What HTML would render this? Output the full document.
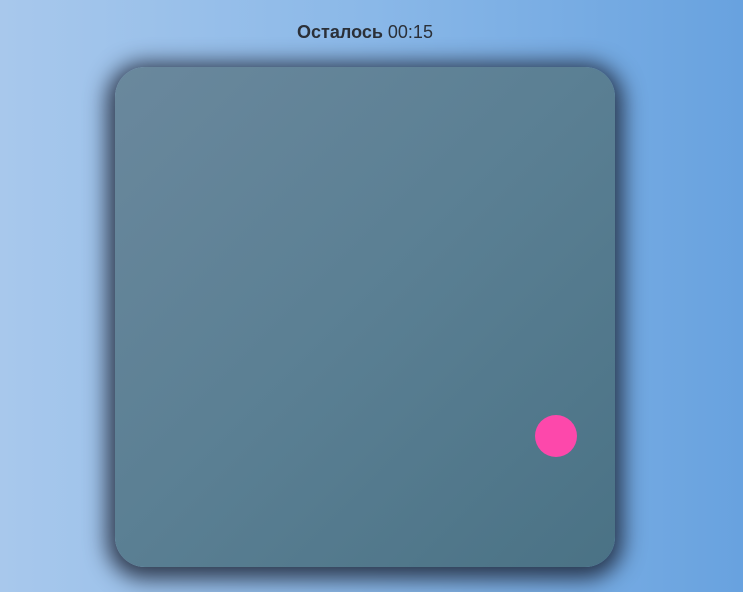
<!DOCTYPE html>
<html><head><meta charset="utf-8"><style>
html,body{margin:0;padding:0;width:743px;height:592px;overflow:hidden}
body{background:linear-gradient(90deg,#a8c8ec 0%,#8ab8e8 50%,#68a2df 100%);font-family:"Liberation Sans",sans-serif;position:relative}
.t{position:absolute;top:22px;left:0;width:730px;text-align:center;font-size:18px;color:#2b3038}
.card{position:absolute;left:115px;top:67px;width:500px;height:500px;border-radius:30px;background:linear-gradient(135deg,#6a889d 0%,#5a7f93 50%,#4a7285 100%);box-shadow:0 4px 22px 8px rgba(20,25,40,.8)}
.dot{position:absolute;left:535px;top:415px;width:42px;height:42px;border-radius:50%;background:#fd48ab}
</style></head><body>
<div class="t"><b>Осталось</b> 00:15</div>
<div class="card"></div>
<div class="dot"></div>
</body></html>
